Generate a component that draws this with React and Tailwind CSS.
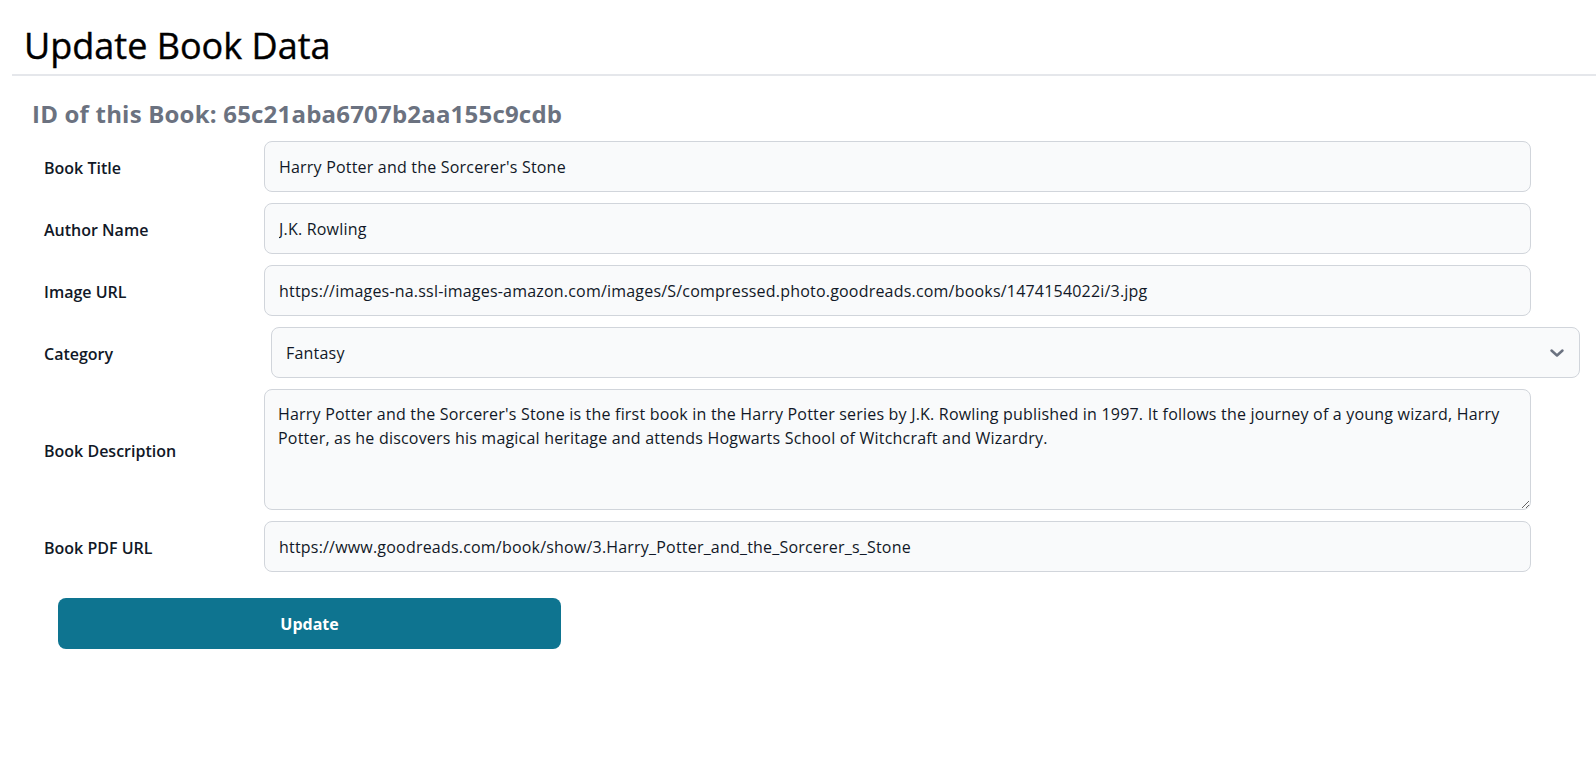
import React from 'react';

const book = {
  _id: '65c21aba6707b2aa155c9cdb',
  title: "Harry Potter and the Sorcerer's Stone",
  author: 'J.K. Rowling',
  image: 'https://images-na.ssl-images-amazon.com/images/S/compressed.photo.goodreads.com/books/1474154022i/3.jpg',
  category: 'Fantasy',
  description:
    "Harry Potter and the Sorcerer's Stone is the first book in the Harry Potter series by J.K. Rowling published in 1997. It follows the journey of a young wizard, Harry\nPotter, as he discovers his magical heritage and attends Hogwarts School of Witchcraft and Wizardry.",
  pdf: 'https://www.goodreads.com/book/show/3.Harry_Potter_and_the_Sorcerer_s_Stone',
};

const inputCls =
  'h-[51px] w-[1267px] rounded-lg border border-[#d1d5db] bg-[#f9fafb] px-[14px] text-[16px] leading-6 tracking-[0.2px] text-[#111827] outline-none';

function Row({ label, children }) {
  return (
    <div className="flex items-center">
      <label className="w-[232px] shrink-0 pl-3 pt-[2px] text-[16px] font-semibold text-[#111827]">{label}</label>
      {children}
    </div>
  );
}

export default function App() {
  return (
    <div className="min-h-screen bg-white" style={{ fontFamily: '"Open Sans", "Noto Sans", sans-serif' }}>
      <div className="ml-3 border-b-2 border-[#e5e7eb]">
        <h1 className="pl-3 pt-[26px] pb-[8px] text-4xl leading-10 font-medium text-black [-webkit-text-stroke:0.4px_black]">
          Update Book Data
        </h1>
      </div>

      <div className="px-8">
        <h2 className="mt-[22px] text-2xl leading-8 font-bold tracking-[0.2px] text-[#6b7280]">
          ID of this Book: {book._id}
        </h2>

        <form className="mt-[11px]">
          <div className="flex flex-col gap-[11px]">
            <Row label="Book Title">
              <input className={inputCls} defaultValue={book.title} />
            </Row>
            <Row label="Author Name">
              <input className={inputCls} defaultValue={book.author} />
            </Row>
            <Row label="Image URL">
              <input className={inputCls} defaultValue={book.image} />
            </Row>
            <Row label="Category">
              <div className="relative ml-[7px]">
                <select
                  defaultValue={book.category}
                  className="h-[51px] w-[1309px] appearance-none rounded-lg border border-[#d1d5db] bg-[#f9fafb] px-[14px] text-[16px] tracking-[0.2px] text-[#111827] outline-none"
                >
                  <option>Fantasy</option>
                  <option>Fiction</option>
                  <option>Mystery</option>
                  <option>Science Fiction</option>
                </select>
                <svg
                  className="pointer-events-none absolute right-[15px] top-[18px] h-4 w-4 text-[#6b7280]"
                  viewBox="0 0 16 16"
                  fill="none"
                  stroke="currentColor"
                  strokeWidth="2.5"
                  strokeLinecap="round"
                  strokeLinejoin="round"
                >
                  <path d="M2.5 5.5l5.5 5 5.5-5" />
                </svg>
              </div>
            </Row>
            <Row label="Book Description">
              <textarea
                rows={4}
                defaultValue={book.description}
                className="h-[121px] w-[1267px] rounded-lg border border-[#d1d5db] bg-[#f9fafb] px-[13px] py-3 text-[16px] leading-6 tracking-[0.2px] text-[#111827] outline-none"
              />
            </Row>
            <Row label="Book PDF URL">
              <input className={inputCls} defaultValue={book.pdf} />
            </Row>
          </div>

          <button
            type="button"
            className="mt-[26px] ml-[26px] h-[51px] w-[503px] rounded-lg bg-[#0e7490] text-[16px] font-bold text-white"
          >
            Update
          </button>
        </form>
      </div>
    </div>
  );
}
